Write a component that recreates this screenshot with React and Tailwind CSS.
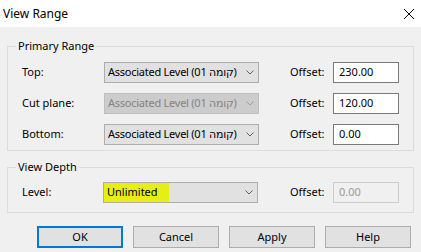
import React from "react";

const font = { fontFamily: '"Segoe UI", "Noto Sans", "DejaVu Sans", sans-serif' };

function Chevron({ color = "#606060" }) {
  return (
    <svg width="8" height="5" viewBox="0 0 8 5" className="shrink-0">
      <path d="M0.5 0.5 L4 4 L7.5 0.5" fill="none" stroke={color} strokeWidth="1" />
    </svg>
  );
}

function Select({ text, disabled }) {
  return (
    <div
      className={
        "w-[155px] h-[21px] flex items-center justify-between pl-[3px] pr-[4px] border " +
        (disabled
          ? "bg-[#cccccc] border-[#bfbfbf] text-[#838383]"
          : "bg-[#e1e1e1] border-[#adadad] text-black")
      }
    >
      <span className="whitespace-nowrap overflow-hidden tracking-[-0.25px]">{text}</span>
      <Chevron color={disabled ? "#9a9a9a" : "#606060"} />
    </div>
  );
}

function Input({ value, disabled }) {
  return (
    <div
      className={
        "w-[66px] h-[21px] flex items-center pl-[5px] border " +
        (disabled
          ? "bg-[#f0f0f0] border-[#cccccc] text-[#9a9a9a]"
          : "bg-white border-[#7a7a7a] text-black")
      }
    >
      {value}
    </div>
  );
}

function Row({ label, select, disabled, value }) {
  return (
    <div className="flex items-center h-[21px]">
      <div className="w-[82px]">{label}</div>
      <Select text={select} disabled={disabled} />
      <div className="ml-[31px] w-[43px]">Offset:</div>
      <Input value={value} />
    </div>
  );
}

export default function App() {
  const lvl = "Associated Level (קומה 01)";
  return (
    <div className="w-[421px] h-[252px] bg-[#f0f0f0] text-[11px] text-black overflow-hidden" style={font}>
      <div className="h-[27px] bg-white flex items-center justify-between pl-[3px] pr-[7px]">
        <span className="text-[12px]">View Range</span>
        <svg width="10" height="10" viewBox="0 0 10 10">
          <path d="M0 0 L10 10 M10 0 L0 10" stroke="#000" strokeWidth="1" />
        </svg>
      </div>

      <fieldset className="mx-[7px] mt-[11px] border border-[#dcdcdc] pl-[14px] pt-[8px] pb-[5px]">
        <legend className="ml-[-6px] px-[2px] leading-[16px]">Primary Range</legend>
        <div className="flex flex-col gap-[10px]">
          <Row label="Top:" select={lvl} value="230.00" />
          <Row label="Cut plane:" select={lvl} disabled value="120.00" />
          <Row label="Bottom:" select={lvl} value="0.00" />
        </div>
      </fieldset>

      <fieldset className="mx-[7px] mt-[8px] border border-[#dcdcdc] pl-[14px] pt-[7px] pb-[9px]">
        <legend className="ml-[-6px] px-[2px] leading-[16px]">View Depth</legend>
        <div className="flex items-center h-[21px]">
          <div className="w-[81px]">Level:</div>
          <div className="w-[155px] h-[21px] flex items-stretch justify-between pr-[4px] border bg-[#e1e1e1] border-[#adadad]">
            <span className="w-[65px] bg-[#e6ee14] pl-[3px] flex items-center">Unlimited</span>
            <span className="flex items-center">
              <Chevron />
            </span>
          </div>
          <div className="ml-[32px] w-[43px]">Offset:</div>
          <Input value="0.00" disabled />
        </div>
      </fieldset>

      <div className="mt-[13px] pl-[37px] flex gap-[10px]">
        <button className="w-[86px] h-[22px] bg-[#e1e1e1] border-2 border-[#0078d7] flex items-center justify-center">OK</button>
        <button className="w-[86px] h-[22px] bg-[#e1e1e1] border border-[#adadad] flex items-center justify-center">Cancel</button>
        <button className="w-[86px] h-[22px] bg-[#e1e1e1] border border-[#adadad] flex items-center justify-center">Apply</button>
        <button className="w-[86px] h-[22px] bg-[#e1e1e1] border border-[#adadad] flex items-center justify-center">Help</button>
      </div>
    </div>
  );
}
